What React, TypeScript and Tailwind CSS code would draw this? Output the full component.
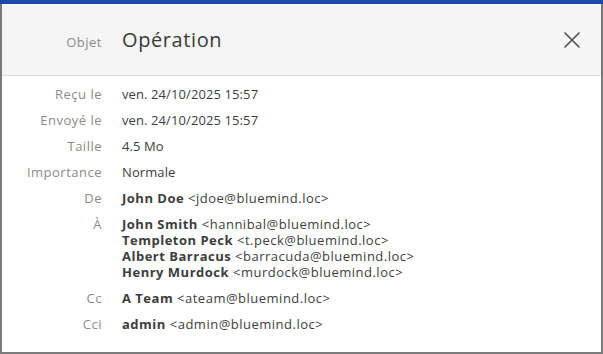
import { X } from "lucide-react"

type Contact = { name: string; email: string }

const meta = [
  { label: "Reçu le", value: "ven. 24/10/2025 15:57" },
  { label: "Envoyé le", value: "ven. 24/10/2025 15:57" },
  { label: "Taille", value: "4.5 Mo" },
  { label: "Importance", value: "Normale" },
]

const recipients: { label: string; contacts: Contact[] }[] = [
  { label: "De", contacts: [{ name: "John Doe", email: "jdoe@bluemind.loc" }] },
  {
    label: "À",
    contacts: [
      { name: "John Smith", email: "hannibal@bluemind.loc" },
      { name: "Templeton Peck", email: "t.peck@bluemind.loc" },
      { name: "Albert Barracus", email: "barracuda@bluemind.loc" },
      { name: "Henry Murdock", email: "murdock@bluemind.loc" },
    ],
  },
  { label: "Cc", contacts: [{ name: "A Team", email: "ateam@bluemind.loc" }] },
  { label: "Cci", contacts: [{ name: "admin", email: "admin@bluemind.loc" }] },
]

export default function App() {
  return (
    <div
      className="w-[603px] h-[354px] flex flex-col bg-[#7a7a7a] overflow-hidden"
      style={{ fontFamily: '"Open Sans", "Noto Sans", sans-serif' }}
    >
      <div className="h-[4px] bg-[#1d47ad] shrink-0" />
      <div className="flex-1 mx-[2px] mb-[2px] bg-white flex flex-col">
        {/* Header */}
        <div className="h-[72px] shrink-0 bg-[#f5f5f5] border-b border-[#dedede] flex items-center pr-[15px]">
          <div className="flex items-baseline flex-1">
            <span className="w-[100px] text-right text-[13px] tracking-[0.5px] text-[#8a8a8a]">Objet</span>
            <span className="ml-[20px] text-[20px] tracking-[0.6px] text-[#3a3a3a]">Opération</span>
          </div>
          <X className="w-[28px] h-[28px] text-[#555]" strokeWidth={1.5} />
        </div>

        {/* Details */}
        <div className="pt-[10px] flex flex-col gap-[10px] text-[13px] leading-[16px] tracking-[0.5px]">
          {meta.map((row) => (
            <div key={row.label} className="grid grid-cols-[100px_1fr] gap-x-[20px]">
              <span className="text-right text-[#8a8a8a]">{row.label}</span>
              <span className="text-[#3d3d3d] tracking-[0.1px]">{row.value}</span>
            </div>
          ))}
          {recipients.map((row) => (
            <div key={row.label} className="grid grid-cols-[100px_1fr] gap-x-[20px]">
              <span className="text-right text-[#8a8a8a]">{row.label}</span>
              <div className="flex flex-col text-[#3d3d3d]">
                {row.contacts.map((c) => (
                  <span key={c.email}>
                    <span className="font-bold">{c.name}</span> &lt;{c.email}&gt;
                  </span>
                ))}
              </div>
            </div>
          ))}
        </div>
      </div>
    </div>
  )
}
